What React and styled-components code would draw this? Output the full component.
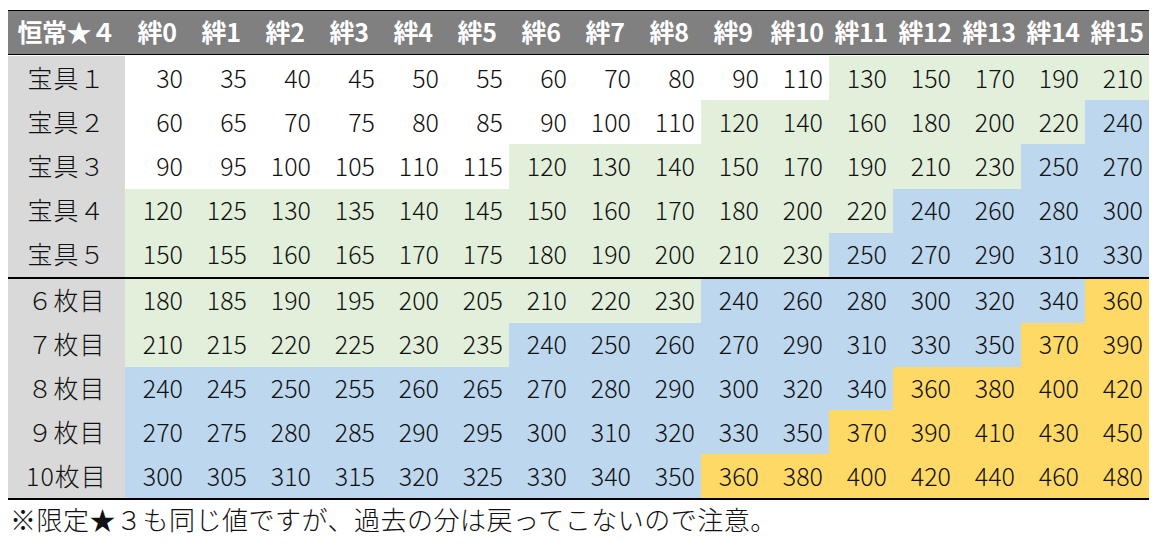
import React from 'react';
import styled, { createGlobalStyle } from 'styled-components';

const GlobalStyle = createGlobalStyle`
  body, html {
    margin: 0;
    background: #fff;
    font-family: "Noto Sans CJK JP", "Noto Sans", sans-serif;
  }
`;

const COLORS = {
  white: '#ffffff',
  green: '#e2efda',
  blue: '#bdd7ee',
  yellow: '#ffd966',
};

const OFFSETS = [0, 5, 10, 15, 20, 25, 30, 40, 50, 60, 80, 100, 120, 140, 160, 180];

const ROWS = [
  '宝具１', '宝具２', '宝具３', '宝具４', '宝具５',
  '６枚目', '７枚目', '８枚目', '９枚目', '10枚目',
];

const colorFor = (v) => {
  if (v >= 360) return COLORS.yellow;
  if (v >= 240) return COLORS.blue;
  if (v >= 120) return COLORS.green;
  return COLORS.white;
};

function App() {
  return (
    <>
      <GlobalStyle />
      <Page>
        <Sheet>
          <HeadCell>恒常★４</HeadCell>
          {OFFSETS.map((_, k) => (
            <HeadCell key={k}>絆{k}</HeadCell>
          ))}
          <HeadRule />
          {ROWS.map((label, i) => {
            const base = 30 * (i + 1);
            return (
              <React.Fragment key={label}>
                {i === 5 && <GroupRule />}
                <LabelCell>{label}</LabelCell>
                {OFFSETS.map((o, k) => {
                  const v = base + o;
                  return (
                    <ValueCell key={k} $bg={colorFor(v)}>{v}</ValueCell>
                  );
                })}
              </React.Fragment>
            );
          })}
        </Sheet>
        <Note>※限定★３も同じ値ですが、過去の分は戻ってこないので注意。</Note>
      </Page>
    </>
  );
}

export default App;

const Page = styled.div`
  padding: 10px 10px 0 8px;
  width: 1141px;
`;

const Sheet = styled.div`
  display: grid;
  grid-template-columns: 117px repeat(16, 1fr);
  grid-template-rows: 43px 2px repeat(5, 44.2px) 2px repeat(5, 43.8px);
  border-top: 1px solid #000;
  border-bottom: 2px solid #000;
  font-size: 25px;
  font-weight: 300;
  color: #111;
`;

const HeadCell = styled.div`
  background: #808080;
  color: #fff;
  font-weight: bold;
  display: flex;
  align-items: center;
  justify-content: center;
  padding-bottom: 3px;
  white-space: nowrap;
  letter-spacing: -0.5px;
`;

const HeadRule = styled.div`
  grid-column: 1 / -1;
  border-top: 1px solid #000;
  background: #fff;
`;

const GroupRule = styled.div`
  grid-column: 1 / -1;
  background: #000;
`;

const LabelCell = styled.div`
  background: #d9d9d9;
  display: flex;
  align-items: center;
  justify-content: center;
  padding-bottom: 3px;
  white-space: nowrap;
  letter-spacing: 1px;
`;

const ValueCell = styled.div`
  background: ${(p) => p.$bg};
  display: flex;
  align-items: center;
  justify-content: flex-end;
  padding: 0 6px 3px 0;
`;

const Note = styled.div`
  font-size: 26px;
  font-weight: 300;
  letter-spacing: 0.5px;
  color: #111;
  padding: 0 0 0 2px;
  white-space: nowrap;
`;
